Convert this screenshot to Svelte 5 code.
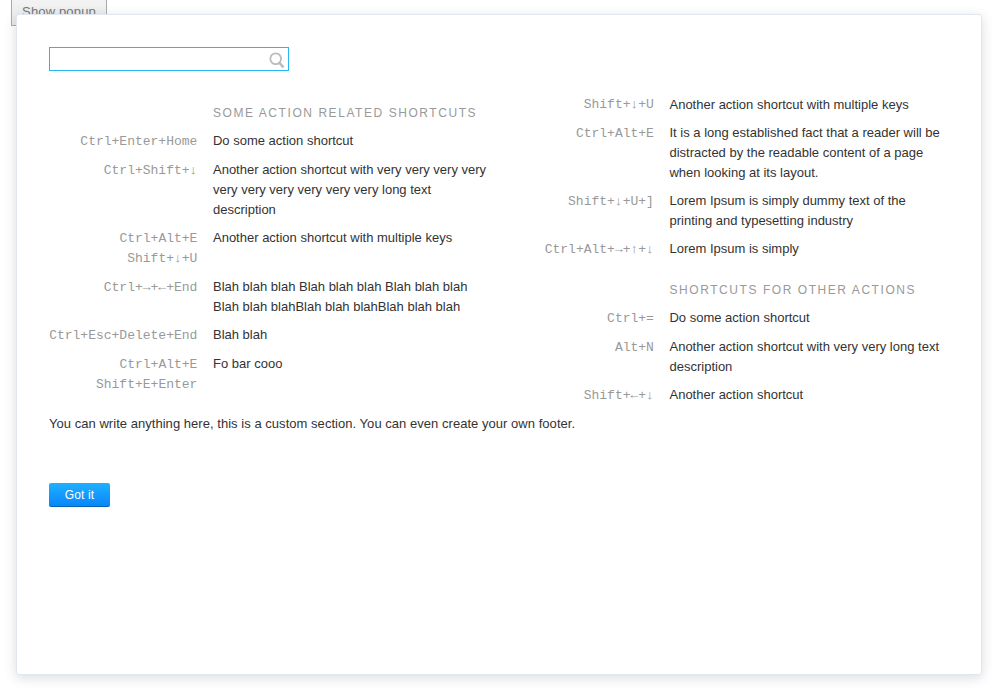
<script>
  const left = [
    { gap: 9, keys: ['Ctrl+Enter+Home'], text: 'Do some action shortcut' },
    { gap: 8, keys: ['Ctrl+Shift+↓'], text: 'Another action shortcut with very very very very very very very very very very long text description' },
    { gap: 9, keys: ['Ctrl+Alt+E', 'Shift+↓+U'], text: 'Another action shortcut with multiple keys' },
    { gap: 8, keys: ['Ctrl+→+←+End'], text: 'Blah blah blah Blah blah blah Blah blah blah Blah blah blahBlah blah blahBlah blah blah' },
    { gap: 9, keys: ['Ctrl+Esc+Delete+End'], text: 'Blah blah' },
    { gap: 8, keys: ['Ctrl+Alt+E', 'Shift+E+Enter'], text: 'Fo bar cooo' }
  ];
  const rightTop = [
    { gap: 8, keys: ['Shift+↓+U'], text: 'Another action shortcut with multiple keys' },
    { gap: 8, keys: ['Ctrl+Alt+E'], text: 'It is a long established fact that a reader will be distracted by the readable content of a page when looking at its layout.' },
    { gap: 8, keys: ['Shift+↓+U+]'], text: 'Lorem Ipsum is simply dummy text of the printing and typesetting industry' },
    { gap: 8, keys: ['Ctrl+Alt+→+↑+↓'], text: 'Lorem Ipsum is simply' }
  ];
  const other = [
    { gap: 9, keys: ['Ctrl+='], text: 'Do some action shortcut' },
    { gap: 8, keys: ['Alt+N'], text: 'Another action shortcut with very very long text description' },
    { gap: 8, keys: ['Shift+←+↓'], text: 'Another action shortcut' }
  ];
</script>

{#snippet rows(items)}
  {#each items as item}
    <div class="row" style="margin-bottom: {item.gap}px">
      <div class="keys">
        {#each item.keys as key}<div>{key}</div>{/each}
      </div>
      <div class="desc">{item.text}</div>
    </div>
  {/each}
{/snippet}

<div class="page">
  <button class="show">Show popup</button>
  <div class="popup">
    <div class="search">
      <input type="text" aria-label="Search" />
      <svg width="16" height="17" viewBox="0 0 16 17" fill="none" stroke="#bbb">
        <circle cx="6.7" cy="6.7" r="5.4" stroke-width="1.8" />
        <path d="M10.6 11L13.8 14.6" stroke-width="2.6" stroke-linecap="round" />
      </svg>
    </div>
    <div class="columns">
      <div class="column first">
        <h2>Some action related shortcuts</h2>
        {@render rows(left)}
      </div>
      <div class="column second">
        {@render rows(rightTop)}
        <h2 class="later">Shortcuts for other actions</h2>
        {@render rows(other)}
      </div>
    </div>
    <p>You can write anything here, this is a custom section. You can even create your own footer.</p>
    <button class="ok">Got it</button>
  </div>
</div>

<style>
  :global(body) {
    margin: 0;
    background: #fff;
  }
  .page {
    position: relative;
    height: 693px;
    overflow: hidden;
    font: 13px/20px "Liberation Sans", Arial, sans-serif;
    color: #333;
  }
  .show {
    display: block;
    box-sizing: border-box;
    width: 96px;
    height: 30px;
    margin: -4px 0 0 11px;
    padding: 2px 0 0;
    border: 1px solid #aaa;
    background: linear-gradient(#f4f4f4, #e9e9e9);
    color: #777;
    font: 13px/26px "Liberation Sans", Arial, sans-serif;
    letter-spacing: 0.15px;
  }
  .popup {
    position: absolute;
    left: 16px;
    top: 14px;
    box-sizing: border-box;
    width: 966px;
    height: 661px;
    padding: 32px;
    border: 1px solid #e2e6ee;
    border-radius: 3px;
    background: #fff;
    box-shadow: 0 3px 12px rgba(60, 75, 100, 0.19);
  }
  .search {
    display: flex;
    box-sizing: border-box;
    width: 240px;
    height: 24px;
    border: 1px solid #29b6f6;
  }
  input {
    flex: 1;
    min-width: 0;
    padding: 0 6px;
    border: 0;
    outline: 0;
    background: none;
    font: inherit;
  }
  svg {
    margin: 4px 3px 0 0;
  }
  .columns {
    display: flex;
    gap: 13px;
    height: 343px;
  }
  .column {
    width: 443.5px;
    flex: none;
  }
  .first {
    padding-top: 32px;
  }
  .second {
    padding-top: 24px;
  }
  h2 {
    margin: 0 0 8px 164px;
    font-size: 12px;
    line-height: 20px;
    font-weight: 400;
    letter-spacing: 1.56px;
    text-transform: uppercase;
    white-space: nowrap;
    color: #999;
  }
  h2.later {
    margin-top: 21px;
  }
  .row {
    display: flex;
  }
  .keys {
    width: 148.4px;
    margin: 1px 15.6px -1px 0;
    flex: none;
    text-align: right;
    white-space: nowrap;
    font-family: "Liberation Mono", "Courier New", monospace;
    color: #999;
  }
  .second .row:first-child .keys {
    margin-top: 0;
  }
  .desc {
    flex: 1;
  }
  p {
    margin: 0;
    letter-spacing: 0.037px;
  }
  .ok {
    display: block;
    box-sizing: border-box;
    width: 61px;
    height: 24px;
    margin-top: 49px;
    padding: 1px 0 0;
    border: 0;
    border-bottom: 1px solid #0562b5;
    border-radius: 2px;
    background: linear-gradient(#20b0ff, #0787fa);
    color: #fff;
    font: 12px/22px "Liberation Sans", Arial, sans-serif;
    letter-spacing: 0.1px;
  }
</style>
